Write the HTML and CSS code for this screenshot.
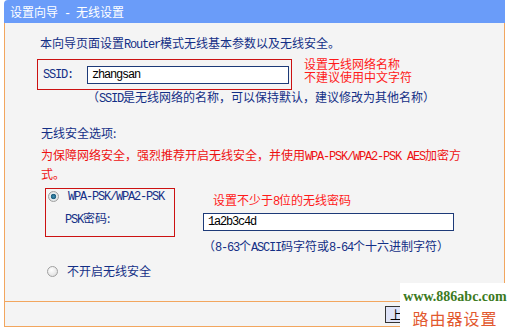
FILE: index.html
```html
<!DOCTYPE html>
<html lang="zh-CN">
<head>
  <meta charset="UTF-8" />
  <title>设置向导 - 无线设置</title>
  <link rel="stylesheet" href="styles.css">
</head>
<body>

  <div class="frame">
    <div class="title">设置向导<span class="en"> - </span>无线设置</div>

    <div class="content">
      <div class="intro">本向导页面设置<span class="en">Router</span>模式无线基本参数以及无线安全。</div>

      <div class="ssid-row">
        <div class="ssid-box">
          <label class="ssid-label en" for="ssid">SSID:</label>
          <input class="field ssid-input" id="ssid" type="text" value="zhangsan" />
        </div>
        <div class="note note-ssid">设置无线网络名称<br />不建议使用中文字符</div>
      </div>
      <div class="hint hint-ssid">（<span class="en">SSID</span>是无线网络的名称，可以保持默认，建议修改为其他名称）</div>

      <div class="section-title">无线安全选项:</div>
      <div class="warn">为保障网络安全，强烈推荐开启无线安全，并使用<span class="en">WPA-PSK/WPA2-PSK AES</span>加密方式。</div>

      <div class="sec-row">
        <div class="sec-box">
          <div class="opt">
            <span class="radio checked"></span>
            <span class="en">WPA-PSK/WPA2-PSK</span>
          </div>
          <div class="psk-label"><span class="en">PSK</span>密码:</div>
        </div>
        <div class="sec-right">
          <div class="note note-psk">设置不少于<span class="en">8</span>位的无线密码</div>
          <input class="field psk-input" type="text" value="1a2b3c4d" />
          <div class="hint">（<span class="en">8-63</span>个<span class="en">ASCII</span>码字符或<span class="en">8-64</span>个十六进制字符）</div>
        </div>
      </div>

      <div class="opt opt-off">
        <span class="radio"></span>
        <span>不开启无线安全</span>
      </div>
    </div>

    <div class="footer">
      <button class="btn">上一步</button>
      <button class="btn">下一步</button>
    </div>
  </div>

  <div class="watermark">
    <div class="wm-url">www.886abc.com</div>
    <div class="wm-name">路由器设置</div>
  </div>

</body>
</html>
```

FILE: styles.css
```css
html, body {
  margin: 0;
  padding: 0;
  background: #ffffff;
  font-family: "Noto Sans CJK SC", sans-serif;
  font-size: 12px;
  color: #132f86;
}

/* half-width latin text, 6px per glyph like the router's bitmap font */
.en {
  font-family: "Liberation Mono", monospace;
  font-size: 12px;
  line-height: 12px;
  letter-spacing: -1.2px;
}

.frame {
  width: 501px;
  margin-left: 4px;
}

.title {
  height: 23px;
  line-height: 24px;
  padding-left: 6px;
  background: #6a9cf9;
  border-top-left-radius: 4px;
  color: #ffffff;
}

.content {
  height: 279px;
  box-sizing: border-box;
  padding: 12px 0 0 32px;
  background: #f4f4f4;
  border-left: 1px solid #f2a65e;
  border-right: 1px solid #f2a65e;
  border-bottom: 1px solid #f2a65e;
}

.intro {
  line-height: 16px;
  margin-left: 3px;
}

.ssid-row {
  display: flex;
  align-items: flex-start;
  gap: 12px;
  margin-top: 8px;
}

.ssid-box {
  display: flex;
  align-items: center;
  width: 255px;
  height: 31px;
  box-sizing: border-box;
  padding: 0 2px 0 5px;
  border: 1px solid #cc1111;
}

.ssid-label {
  width: 44px;
}

.field {
  height: 18px;
  box-sizing: border-box;
  margin: 0;
  padding: 0 4px;
  border: 1px solid #1d3a78;
  background: #ffffff;
  font-family: "Liberation Mono", monospace;
  font-size: 12px;
  letter-spacing: -1.2px;
  color: #000000;
}

.ssid-input {
  width: 202px;
  margin-top: 1px;
}

.note {
  color: #ff1a1a;
}

.note-ssid {
  line-height: 13px;
  margin-top: -2px;
}

.hint {
  line-height: 14px;
}

.hint-ssid {
  margin-left: 50px;
}

.section-title {
  margin: 20px 0 0 4px;
  line-height: 16px;
}

.warn {
  width: 426px;
  margin: 4px 0 0 4px;
  line-height: 19px;
  color: #ee1111;
}

.sec-row {
  display: flex;
  align-items: flex-start;
  gap: 28px;
  margin: 5px 0 0 8px;
}

.sec-box {
  width: 130px;
  height: 49px;
  box-sizing: border-box;
  padding-left: 2px;
  border: 1px solid #cc1111;
}

.opt {
  display: flex;
  align-items: center;
  gap: 9px;
  line-height: 18px;
}

.sec-box .opt .en {
  margin-top: 2px;
}

.psk-label {
  margin: 6px 0 0 17px;
  line-height: 18px;
}

.radio {
  width: 11px;
  height: 11px;
  box-sizing: border-box;
  border-radius: 50%;
  border: 1px solid #a0a0a0;
  background: radial-gradient(circle at 40% 35%, #ffffff 0%, #e4e4e4 70%, #cfcfcf 100%);
}

.radio.checked {
  background: radial-gradient(circle, #3c8fb0 0%, #1f5f80 38%, #e8eef0 48%, #d0d0d0 100%);
}

.sec-right {
  display: flex;
  flex-direction: column;
  align-items: flex-start;
}

.note-psk {
  margin: 3px 0 0 10px;
  line-height: 18px;
}

.psk-input {
  width: 251px;
  margin-top: 4px;
}

.sec-right .hint {
  margin-top: 7px;
  line-height: 16px;
}

.opt-off {
  margin: 8px 0 0 10px;
}

.footer {
  height: 25px;
  box-sizing: border-box;
  display: flex;
  align-items: center;
  justify-content: flex-end;
  gap: 6px;
  padding-right: 21px;
  background: #f4f4f4;
  border-left: 1px solid #f2a65e;
  border-right: 1px solid #f2a65e;
  border-bottom: 1px solid #f2a65e;
}

.btn {
  height: 17px;
  padding: 0 4px;
  border: 1px solid #333333;
  background: #dfe4f8;
  font-family: "Noto Sans CJK SC", sans-serif;
  font-size: 12px;
  line-height: 15px;
  color: #000000;
}

.watermark {
  position: absolute;
  left: 400px;
  top: 283px;
  width: 110px;
  height: 49px;
  background: #ffffff;
  text-align: center;
}

.wm-url {
  margin-top: 6px;
  font-family: "Liberation Serif", serif;
  font-weight: bold;
  font-size: 14px;
  line-height: 16px;
  color: #3c7a1e;
}

.wm-name {
  margin-top: 3px;
  font-family: "Noto Sans CJK SC", sans-serif;
  font-size: 16px;
  line-height: 20px;
  letter-spacing: 1px;
  color: #e2592f;
}
```
